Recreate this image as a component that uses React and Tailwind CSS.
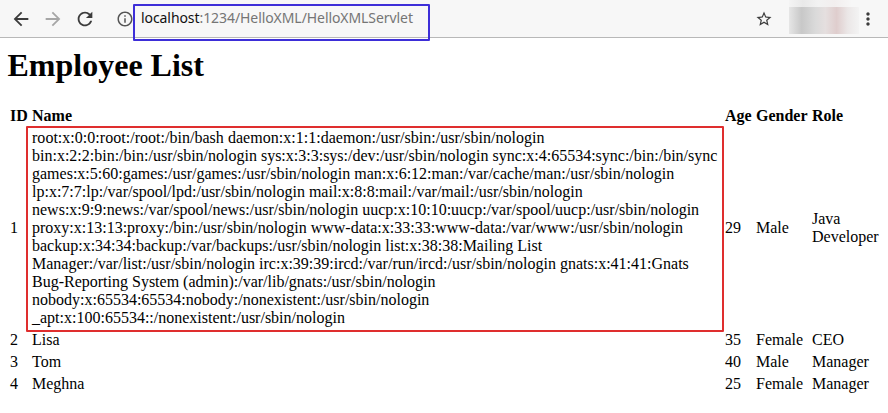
import React from "react";
import { MdArrowBack, MdArrowForward, MdRefresh, MdInfoOutline, MdStarBorder, MdMoreVert } from "react-icons/md";

const passwdLines = [
  "root:x:0:0:root:/root:/bin/bash daemon:x:1:1:daemon:/usr/sbin:/usr/sbin/nologin",
  "bin:x:2:2:bin:/bin:/usr/sbin/nologin sys:x:3:3:sys:/dev:/usr/sbin/nologin sync:x:4:65534:sync:/bin:/bin/sync",
  "games:x:5:60:games:/usr/games:/usr/sbin/nologin man:x:6:12:man:/var/cache/man:/usr/sbin/nologin",
  "lp:x:7:7:lp:/var/spool/lpd:/usr/sbin/nologin mail:x:8:8:mail:/var/mail:/usr/sbin/nologin",
  "news:x:9:9:news:/var/spool/news:/usr/sbin/nologin uucp:x:10:10:uucp:/var/spool/uucp:/usr/sbin/nologin",
  "proxy:x:13:13:proxy:/bin:/usr/sbin/nologin www-data:x:33:33:www-data:/var/www:/usr/sbin/nologin",
  "backup:x:34:34:backup:/var/backups:/usr/sbin/nologin list:x:38:38:Mailing List",
  "Manager:/var/list:/usr/sbin/nologin irc:x:39:39:ircd:/var/run/ircd:/usr/sbin/nologin gnats:x:41:41:Gnats",
  "Bug-Reporting System (admin):/var/lib/gnats:/usr/sbin/nologin",
  "nobody:x:65534:65534:nobody:/nonexistent:/usr/sbin/nologin",
  "_apt:x:100:65534::/nonexistent:/usr/sbin/nologin",
];

const employees = [
  { id: 2, name: "Lisa", age: 35, gender: "Female", role: "CEO" },
  { id: 3, name: "Tom", age: 40, gender: "Male", role: "Manager" },
  { id: 4, name: "Meghna", age: 25, gender: "Female", role: "Manager" },
];

function Toolbar() {
  return (
    <header className="flex h-[38px] items-center border-b border-[#b8b8b8] bg-[#f7f7f7] pl-[10px] text-[#3c3c3c]">
      <MdArrowBack className="size-[22px] shrink-0" />
      <MdArrowForward className="ml-[10px] size-[22px] shrink-0 text-[#a6a6a6]" />
      <MdRefresh className="ml-[10px] size-[22px] shrink-0" />
      <MdInfoOutline className="ml-[20px] size-[18px] shrink-0 text-[#555555]" />
      <div className="relative ml-[7px] flex h-full w-[290px] items-center">
        <span className="-mt-px whitespace-nowrap font-['Noto_Sans',sans-serif] text-[14px] leading-[20px] tracking-[-0.075px] text-[#757575]">
          <span className="text-[#111111]">localhost</span>:1234/HelloXML/HelloXMLServlet
        </span>
        <span className="absolute -left-[8px] top-[4px] h-[37px] w-[297px] rounded-[1px] border-2 border-[#3d2ed8]" />
      </div>
      <MdStarBorder className="ml-[324px] size-[18px] shrink-0" />
      <div className="ml-[16px] flex h-[34px] w-[70px] shrink-0 flex-col self-start">
        <div className="h-[7px] bg-[linear-gradient(90deg,#f4f4f4_0%,#e9e9e9_20%,#f2f2f2_42%,#f2eeee_65%,#f7f7f7_90%)]" />
        <div className="flex-1 bg-[linear-gradient(90deg,#e6e6e6_0%,#c8c8c8_18%,#dadada_38%,#e5dfdf_52%,#dfcdcd_68%,#ebe7e7_84%,#f3f3f3_100%)]" />
      </div>
      <MdMoreVert className="-ml-px size-[20px] shrink-0" />
    </header>
  );
}

export default function App() {
  return (
    <div className="h-[413px] w-[888px] overflow-hidden bg-white font-['Liberation_Serif',serif] text-[16px] leading-[18px] text-black">
      <Toolbar />
      <main className="pl-[7px]">
        <h1 className="h-[66px] pl-[0.5px] pt-[9px] text-[32px] font-bold leading-[36px]">Employee List</h1>
        <table className="w-[880px] table-fixed border-separate border-spacing-[2px] whitespace-nowrap text-left">
          <colgroup>
            <col className="w-[20px]" />
            <col className="w-[691px]" />
            <col className="w-[29px]" />
            <col className="w-[54px]" />
            <col />
          </colgroup>
          <thead>
            <tr>
              <th className="p-px">ID</th>
              <th className="p-px">Name</th>
              <th className="p-px">Age</th>
              <th className="p-px">Gender</th>
              <th className="p-px">Role</th>
            </tr>
          </thead>
          <tbody>
            <tr>
              <td className="p-px">1</td>
              <td className="relative p-px">
                {passwdLines.map((line) => (
                  <div key={line} className="first:tracking-[0.025px]">{line}</div>
                ))}
                <span className="absolute -left-[5px] -top-[2px] h-[206px] w-[698px] rounded-[1px] border-2 border-[#df2e2e]" />
              </td>
              <td className="p-px">29</td>
              <td className="p-px">Male</td>
              <td className="p-px">
                Java
                <br />
                Developer
              </td>
            </tr>
            {employees.map((e) => (
              <tr key={e.id}>
                <td className="p-px">{e.id}</td>
                <td className="p-px">{e.name}</td>
                <td className="p-px">{e.age}</td>
                <td className="p-px">{e.gender}</td>
                <td className="p-px">{e.role}</td>
              </tr>
            ))}
          </tbody>
        </table>
      </main>
    </div>
  );
}
